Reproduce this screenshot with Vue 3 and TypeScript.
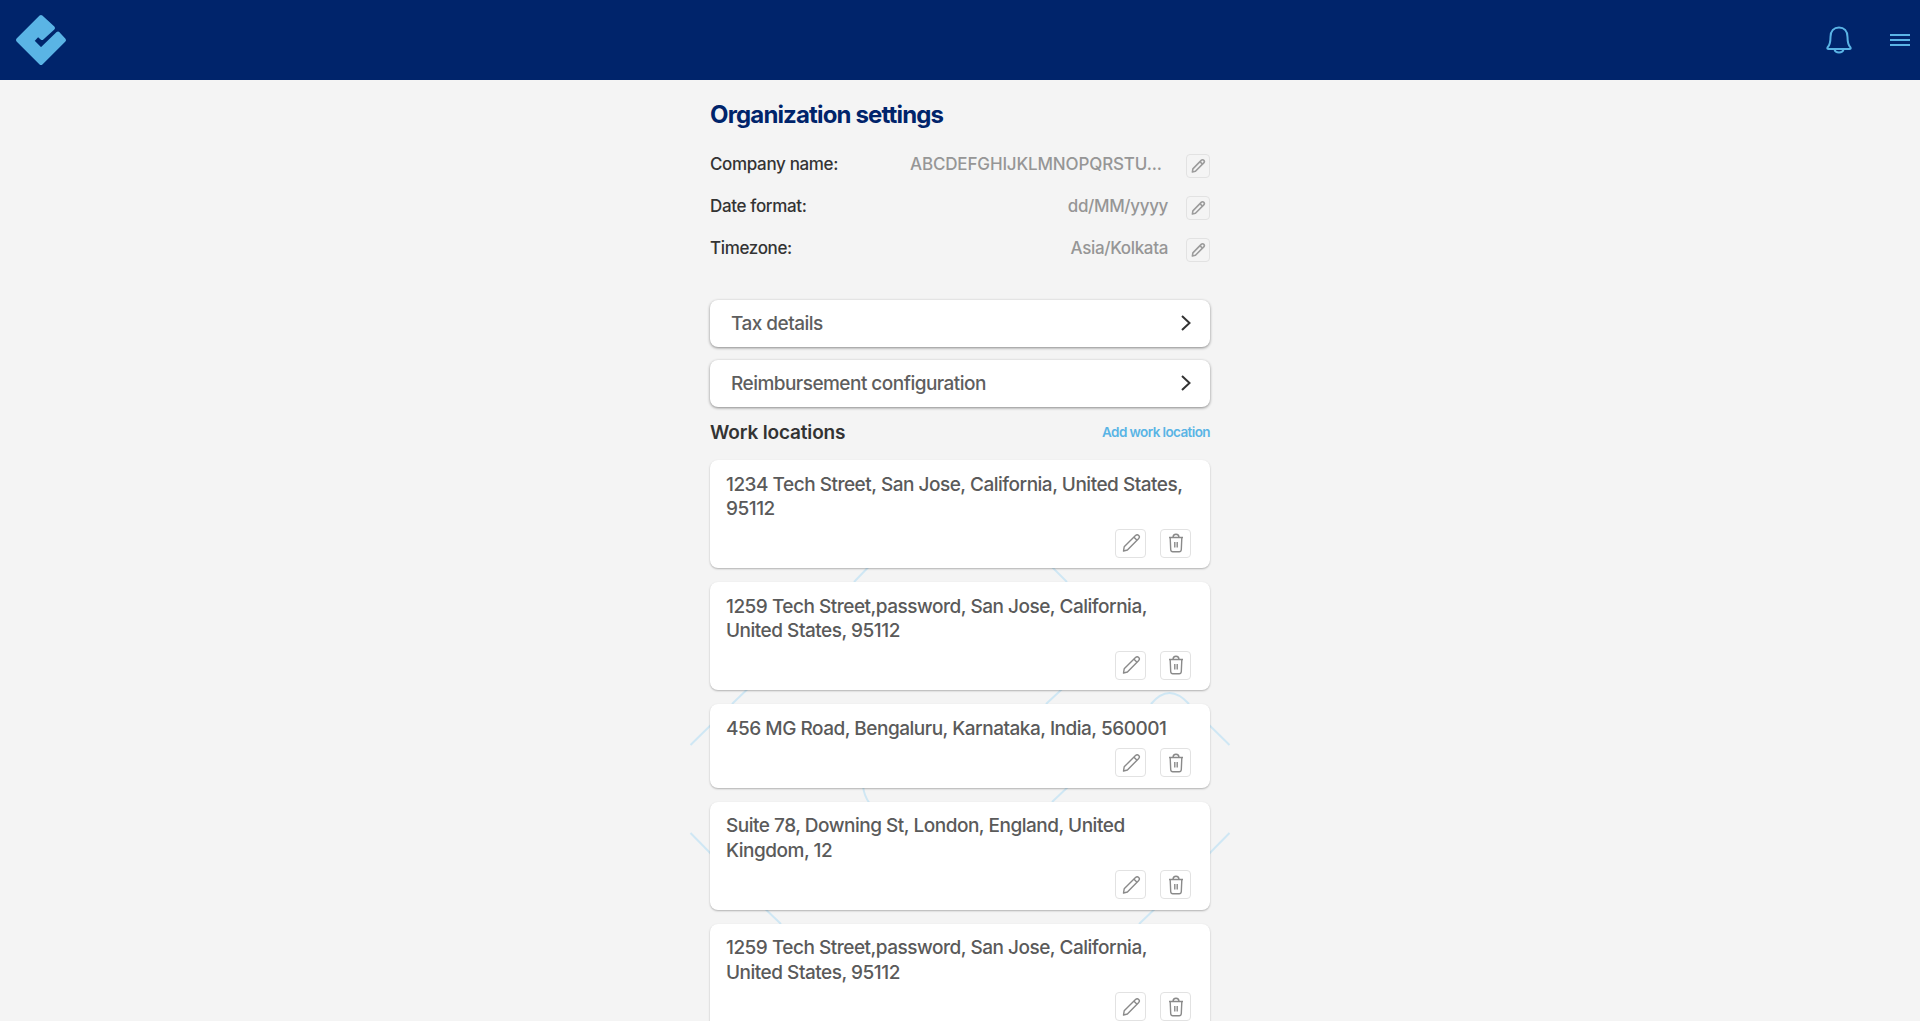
<script setup lang="ts">
interface Setting {
  label: string
  value: string
  truncated?: boolean
}

const settings: Setting[] = [
  { label: 'Company name:', value: 'ABCDEFGHIJKLMNOPQRSTU...', truncated: true },
  { label: 'Date format:', value: 'dd/MM/yyyy' },
  { label: 'Timezone:', value: 'Asia/Kolkata' }
]

const sections = ['Tax details', 'Reimbursement configuration']

const locations = [
  '1234 Tech Street, San Jose, California, United States, 95112',
  '1259 Tech Street,password, San Jose, California, United States, 95112',
  '456 MG Road, Bengaluru, Karnataka, India, 560001',
  'Suite 78, Downing St, London, England, United Kingdom, 12',
  '1259 Tech Street,password, San Jose, California, United States, 95112'
]

// faint pattern that shows through the gaps between the location cards
const patternLines = [
  'M880 555 L854 582',
  'M1040 555 L1067 582',
  'M760 677 L732 704',
  'M1075 677 L1046 704',
  'M720 716 L690.5 745',
  'M1200 716 L1229.5 745',
  'M1151 704 Q1169 682 1189 704',
  'M863 786 Q864 796 870 804',
  'M1070 785 L1052 802',
  'M690.5 833 L720 863',
  'M1229.5 833 L1200 863',
  'M760 904 L781 924',
  'M1160 904 L1139 924'
]
</script>

<template>
  <div class="page">
    <header class="topbar">
      <svg class="logo" width="82" height="80" viewBox="0 0 82 80">
        <path
          d="M18 40 L41 17 L53 28 L42 38 L38 34.5 L32 41 L41 50 L58 33.5 L64 40 L41 63 Z"
          fill="#5ab4e5"
          stroke="#5ab4e5"
          stroke-width="4"
          stroke-linejoin="round"
        />
      </svg>
      <div class="topbar-actions">
        <svg width="28" height="30" viewBox="0 0 28 30" fill="none" stroke="#5ab4e5" stroke-width="2">
          <path d="M2.5 22.5 C5 20 5.5 17 5.5 12 C5.5 6 9 2.5 14 2.5 C19 2.5 22.5 6 22.5 12 C22.5 17 23 20 25.5 22.5 C26 23.5 25.5 24 24.5 24 L3.5 24 C2.5 24 2 23.5 2.5 22.5 Z" />
          <path d="M9.5 24.5 C10.5 28.5 17.5 28.5 18.5 24.5" />
        </svg>
        <svg width="20" height="14" viewBox="0 0 20 14" stroke="#5ab4e5" stroke-width="2">
          <path d="M0 2 H20 M0 7 H20 M0 12 H20" />
        </svg>
      </div>
    </header>

    <main class="content">
      <svg class="pattern" width="1920" height="1021" viewBox="0 80 1920 1021" fill="none" stroke="#cfe7f4" stroke-width="2">
        <path v-for="d in patternLines" :key="d" :d="d" />
      </svg>

      <div class="column">
        <h1 class="title">Organization settings</h1>

        <div class="settings">
          <div v-for="row in settings" :key="row.label" class="setting">
            <span class="setting-label">{{ row.label }}</span>
            <span class="setting-value" :class="{ 'setting-value--truncated': row.truncated }">{{ row.value }}</span>
            <button class="icon-btn icon-btn--small" type="button">
              <svg width="16" height="16" viewBox="0 0 20 20" fill="none" stroke="#9c9c9c" stroke-width="2" stroke-linejoin="round">
                <path d="M3 17.5 L3.6 13.6 L14 3 C15 2 16.4 2 17.3 3 C18.2 4 18.1 5.2 17.2 6.1 L6.8 16.6 Z" />
                <path d="M12.5 4.6 L15.6 7.8" />
              </svg>
            </button>
          </div>
        </div>

        <div v-for="section in sections" :key="section" class="section-card">
          <span>{{ section }}</span>
          <svg width="12" height="18" viewBox="0 0 12 18" fill="none" stroke="#333" stroke-width="2">
            <path d="M2 1 L9.5 8 L2 15" />
          </svg>
        </div>

        <div class="locations-head">
          <h2>Work locations</h2>
          <a class="add-link">Add work location</a>
        </div>

        <div class="locations">
          <div v-for="(address, i) in locations" :key="i" class="location">
            <p>{{ address }}</p>
            <div class="location-actions">
              <button class="icon-btn" type="button">
                <svg width="20" height="20" viewBox="0 0 20 20" fill="none" stroke="#8a8a8a" stroke-width="1.4" stroke-linejoin="round">
                  <path d="M2.5 18 L3.2 13.8 L14.5 2.6 C15.5 1.6 16.8 1.6 17.7 2.5 C18.6 3.4 18.5 4.7 17.5 5.7 L6.4 17 Z" />
                  <path d="M13 4.2 L16 7.2" />
                </svg>
              </button>
              <button class="icon-btn" type="button">
                <svg width="16" height="20" viewBox="0 0 16 20" fill="none" stroke="#8a8a8a" stroke-width="1.4" stroke-linejoin="round">
                  <path d="M2.2 5 L2.7 16.5 C2.8 18 3.5 18.7 4.8 18.7 L11.2 18.7 C12.5 18.7 13.2 18 13.3 16.5 L13.8 5" />
                  <path d="M1 4.5 H15 M5 4.5 C5 2.2 6 1.3 8 1.3 C10 1.3 11 2.2 11 4.5 M6.8 9 V14.5 M9.2 9 V14.5" />
                </svg>
              </button>
            </div>
          </div>
        </div>
      </div>
    </main>
  </div>
</template>

<style>
html,
body {
  margin: 0;
  height: 100%;
  overflow: hidden;
  background: #f4f4f4;
}
</style>

<style scoped>
.page {
  height: 1021px;
  overflow: hidden;
  font-family: Inter, "Liberation Sans", sans-serif;
  background: #f4f4f4;
}

.topbar {
  height: 80px;
  display: flex;
  align-items: center;
  justify-content: space-between;
  background: #00246b;
}

.logo {
  display: block;
}

.topbar-actions {
  display: flex;
  align-items: center;
  gap: 37px;
  padding-right: 10px;
}

.content {
  position: relative;
  height: 941px;
}

.pattern {
  position: absolute;
  top: 0;
  left: 0;
}

.column {
  position: relative;
  width: 500px;
  margin: 0 auto;
}

.title {
  margin: 0;
  padding-top: 21px;
  font-size: 24px;
  line-height: 28px;
  font-weight: 700;
  letter-spacing: -0.85px;
  color: #00246b;
}

.settings {
  display: flex;
  flex-direction: column;
  gap: 18px;
  margin-top: 25px;
}

.setting {
  display: flex;
  align-items: flex-start;
  height: 24px;
  font-size: 17px;
  font-weight: 450;
  line-height: 20px;
  letter-spacing: -0.35px;
}

.setting-label {
  width: 200px;
  flex-shrink: 0;
  color: #333;
}

.setting-value {
  flex: 1;
  min-width: 0;
  text-align: right;
  padding-right: 18px;
  white-space: nowrap;
  color: #969696;
}

.setting-value--truncated {
  text-align: left;
  letter-spacing: -0.15px;
}

.icon-btn {
  display: flex;
  align-items: center;
  justify-content: center;
  width: 31px;
  height: 29px;
  padding: 0;
  background: #fff;
  border: 1px solid #e2e2e2;
  border-radius: 4px;
}

.icon-btn--small {
  flex-shrink: 0;
  width: 24px;
  height: 24px;
  background: transparent;
}

.section-card {
  display: flex;
  align-items: center;
  justify-content: space-between;
  height: 47px;
  margin-top: 13px;
  padding: 0 18px 0 21px;
  box-sizing: border-box;
  font-size: 19px;
  font-weight: 450;
  letter-spacing: -0.53px;
  color: #5e5e5e;
  background: #fff;
  border-radius: 8px;
  box-shadow: 0 1px 3px rgba(0, 0, 0, 0.45);
}

.settings + .section-card {
  margin-top: 38px;
}

.locations-head {
  display: flex;
  align-items: center;
  justify-content: space-between;
  margin-top: 12px;
  height: 26px;
}

.locations-head h2 {
  margin: 0;
  font-size: 19px;
  font-weight: 600;
  letter-spacing: -0.15px;
  color: #333;
}

.add-link {
  font-size: 13.5px;
  font-weight: 600;
  letter-spacing: -0.6px;
  color: #5ab4e5;
}

.locations {
  display: flex;
  flex-direction: column;
  gap: 14px;
  margin-top: 15px;
}

.location {
  padding: 12.5px 19px 10.5px 16px;
  background: #fff;
  border-radius: 8px;
  box-shadow: 0 1px 2px rgba(0, 0, 0, 0.28);
}

.location p {
  margin: 0;
  font-size: 19px;
  font-weight: 450;
  line-height: 24.5px;
  letter-spacing: -0.49px;
  color: #5a5a5a;
}

.location-actions {
  display: flex;
  justify-content: flex-end;
  gap: 14px;
  margin-top: 7px;
}
</style>
